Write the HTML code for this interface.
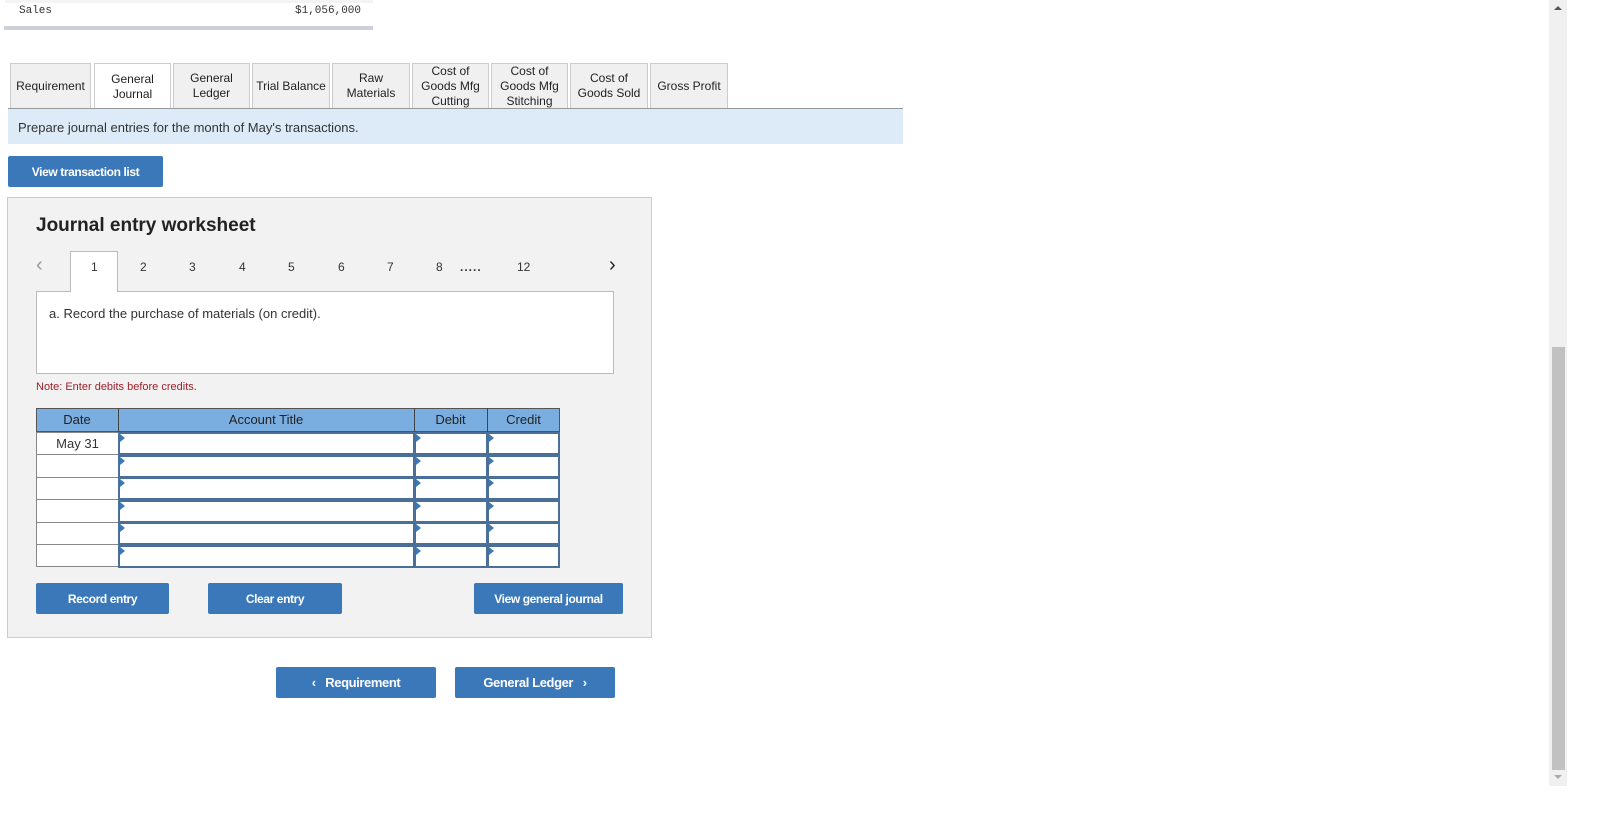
<!DOCTYPE html>
<html><head><style>
body{margin:0;width:1617px;height:814px;background:#fff;position:relative;overflow:hidden;font-family:"Liberation Sans",sans-serif;color:#222}
.a{position:absolute}
.mono{font-family:"Liberation Mono",monospace;font-size:11px;color:#333}
.tab{position:absolute;top:63px;height:45px;border:1px solid #ccc;border-bottom:none;background:#f0f0f0;font-size:12px;display:flex;align-items:center;justify-content:center;text-align:center;line-height:15px;color:#222;box-sizing:border-box}
.btn{position:absolute;background:#3a78ba;color:#fff;font-weight:bold;font-size:12px;display:flex;align-items:center;justify-content:center;border-radius:2px;letter-spacing:-0.4px}
.pg{position:absolute;top:260px;font-size:12px;color:#333}
.cell{position:absolute;box-sizing:border-box;background:#fff}
.tri{position:absolute;width:0;height:0;border-top:4px solid transparent;border-bottom:4px solid transparent;border-left:5px solid #3a78ba}
</style></head><body>
<div class="a" style="left:5px;top:0;width:368px;height:3px;background:#f4f4f4"></div>
<div class="a mono" style="left:19px;top:5px">Sales</div>
<div class="a mono" style="left:295px;top:5px">$1,056,000</div>
<div class="a" style="left:4px;top:26px;width:369px;height:4px;background:#ccd0d8"></div>

<div class="tab" style="left:10px;width:81px">Requirement</div>
<div class="tab" style="left:94px;width:77px;background:#fff;height:46px">General<br>Journal</div>
<div class="tab" style="left:173px;width:77px">General<br>Ledger</div>
<div class="tab" style="left:252px;width:78px">Trial Balance</div>
<div class="tab" style="left:332px;width:78px">Raw<br>Materials</div>
<div class="tab" style="left:412px;width:77px">Cost of<br>Goods Mfg<br>Cutting</div>
<div class="tab" style="left:491px;width:77px">Cost of<br>Goods Mfg<br>Stitching</div>
<div class="tab" style="left:570px;width:78px">Cost of<br>Goods Sold</div>
<div class="tab" style="left:650px;width:78px">Gross Profit</div>
<div class="a" style="left:8px;top:108px;width:895px;height:1px;background:#999"></div>
<div class="a" style="left:8px;top:109px;width:895px;height:35px;background:#dcebf7"></div>
<div class="a" style="left:18px;top:120px;font-size:13px;color:#333">Prepare journal entries for the month of May's transactions.</div>

<div class="btn" style="left:8px;top:156px;width:155px;height:31px">View transaction list</div>

<div class="a" style="left:7px;top:197px;width:643px;height:439px;background:#f2f2f2;border:1px solid #ccc"></div>
<div class="a" style="left:36px;top:215px;font-size:19px;font-weight:bold;color:#222">Journal entry worksheet</div>
<div class="a" style="left:36px;top:254px;font-size:20px;color:#999">&#8249;</div>
<div class="a" style="left:609px;top:254px;font-size:20px;color:#222">&#8250;</div>
<div class="a" style="left:70px;top:251px;width:48px;height:41px;background:#fff;border:1px solid #bbb;border-bottom:none;box-sizing:border-box;z-index:2"></div>
<div class="pg" style="left:91px;z-index:3">1</div>
<div class="pg" style="left:140px">2</div>
<div class="pg" style="left:189px">3</div>
<div class="pg" style="left:239px">4</div>
<div class="pg" style="left:288px">5</div>
<div class="pg" style="left:338px">6</div>
<div class="pg" style="left:387px">7</div>
<div class="pg" style="left:436px">8</div>
<div class="pg" style="left:460px;font-weight:bold;letter-spacing:1px">.....</div>
<div class="pg" style="left:517px">12</div>
<div class="a" style="left:36px;top:291px;width:578px;height:83px;background:#fff;border:1px solid #bbb;box-sizing:border-box"></div>
<div class="a" style="left:49px;top:306px;font-size:13px;color:#333">a. Record the purchase of materials (on credit).</div>
<div class="a" style="left:36px;top:381px;font-size:11px;color:#a0202a">Note: Enter debits before credits.</div>

<div class="a" style="left:36px;top:408px;width:524px;height:24px;background:#7aaee0;border:1px solid #555;box-sizing:border-box"></div>
<div class="a" style="left:118px;top:408px;width:1px;height:24px;background:#444"></div>
<div class="a" style="left:414px;top:408px;width:1px;height:24px;background:#444"></div>
<div class="a" style="left:487px;top:408px;width:1px;height:24px;background:#444"></div>
<div class="a" style="left:36px;top:412px;width:82px;text-align:center;font-size:13px">Date</div>
<div class="a" style="left:118px;top:412px;width:296px;text-align:center;font-size:13px">Account Title</div>
<div class="a" style="left:414px;top:412px;width:73px;text-align:center;font-size:13px">Debit</div>
<div class="a" style="left:487px;top:412px;width:73px;text-align:center;font-size:13px">Credit</div>
<div class="a" style="left:36px;top:432px;width:524px;height:135px">
<div class="cell" style="left:0;top:0;width:83px;height:135px;border:1px solid #888"></div>
<div class="a" style="left:0;top:22px;width:83px;height:1px;background:#888"></div>
<div class="a" style="left:0;top:45px;width:83px;height:1px;background:#888"></div>
<div class="a" style="left:0;top:67px;width:83px;height:1px;background:#888"></div>
<div class="a" style="left:0;top:90px;width:83px;height:1px;background:#888"></div>
<div class="a" style="left:0;top:112px;width:83px;height:1px;background:#888"></div>
<div class="a" style="left:0;top:4px;width:83px;text-align:center;font-size:13px;color:#333">May 31</div>
</div>
<div id="rows"></div>
<script>
var h='';for(var i=0;i<6;i++){var t=432+i*22.5;
[[118,297],[414,74],[487,73]].forEach(function(c){
h+='<div class="cell" style="left:'+c[0]+'px;top:'+t+'px;width:'+c[1]+'px;height:23px;border:2px solid #4a6f98"></div><div class="tri" style="left:'+(c[0]+2)+'px;top:'+(t+2)+'px"></div>';});}
document.getElementById('rows').innerHTML=h;
</script>

<div class="btn" style="left:36px;top:583px;width:133px;height:31px">Record entry</div>
<div class="btn" style="left:208px;top:583px;width:134px;height:31px">Clear entry</div>
<div class="btn" style="left:474px;top:583px;width:149px;height:31px">View general journal</div>

<div class="btn" style="left:276px;top:667px;width:160px;height:31px;font-size:13px">&#8249;&nbsp;&nbsp;&nbsp;Requirement</div>
<div class="btn" style="left:455px;top:667px;width:160px;height:31px;font-size:13px">General Ledger&nbsp;&nbsp;&nbsp;&#8250;</div>

<div class="a" style="left:1549px;top:0;width:18px;height:786px;background:#f0f0f0"></div>
<div class="a" style="left:1552px;top:347px;width:13px;height:423px;background:#c1c1c1"></div>
<div class="a" style="left:1554px;top:6px;width:0;height:0;border-left:4px solid transparent;border-right:4px solid transparent;border-bottom:4px solid #555"></div>
<div class="a" style="left:1554px;top:775px;width:0;height:0;border-left:4px solid transparent;border-right:4px solid transparent;border-top:4px solid #aaa"></div>
</body></html>
